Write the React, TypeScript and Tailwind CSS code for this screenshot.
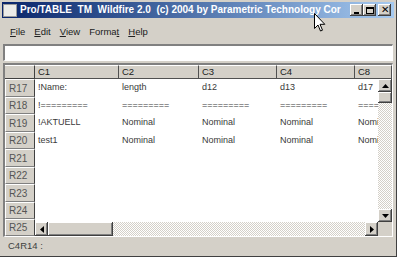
import { ReactNode } from 'react';

const RAISED =
  'bg-[#d4d0c8] shadow-[inset_-1px_-1px_0_#404040,inset_1px_1px_0_#ffffff,inset_-2px_-2px_0_#808080]';
const TRACK = 'bg-[repeating-conic-gradient(#d4d0c8_0_25%,#ffffff_0_50%)] bg-[length:2px_2px]';

const COLS = [
  { id: 'C1', w: 'w-[84px] shrink-0' },
  { id: 'C2', w: 'w-[80px] shrink-0' },
  { id: 'C3', w: 'w-[78px] shrink-0' },
  { id: 'C4', w: 'w-[78px] shrink-0' },
  { id: 'C8', w: 'flex-1 min-w-0' },
];

// last column is hidden behind the scrollbar, only its visible part is kept
const ROWS = [
  ['!Name:', 'length', 'd12', 'd13', 'd17'],
  ['!=========', '=========', '=========', '=========', '===='],
  ['!AKTUELL', 'Nominal', 'Nominal', 'Nominal', 'Nomi'],
  ['test1', 'Nominal', 'Nominal', 'Nominal', 'Nomi'],
];

const ROW_IDS = ['R17', 'R18', 'R19', 'R20', 'R21', 'R22', 'R23', 'R24', 'R25'];
const ROW_H = [
  'h-[18px]',
  'h-[17px]',
  'h-[18px]',
  'h-[17px]',
  'h-[18px]',
  'h-[17px]',
  'h-[18px]',
  'h-[17px]',
  'h-[17px]',
];

function Arrow({ dir }: { dir: 'up' | 'down' | 'left' | 'right' }) {
  const pts = {
    up: '0,4 7,4 3.5,0',
    down: '0,0 7,0 3.5,4',
    left: '4,0 4,7 0,3.5',
    right: '0,0 0,7 4,3.5',
  }[dir];
  const vertical = dir === 'up' || dir === 'down';
  return (
    <svg width={vertical ? 7 : 4} height={vertical ? 4 : 7} viewBox={vertical ? '0 0 7 4' : '0 0 4 7'}>
      <polygon points={pts} fill="#000" />
    </svg>
  );
}

function TitleButton({ children }: { children: ReactNode }) {
  return (
    <div className={`${RAISED} w-[13px] h-[12px] flex items-center justify-center`}>{children}</div>
  );
}

function MenuItem({ pre, u, post }: { pre?: string; u: string; post?: string }) {
  return (
    <span className="text-[#202020]">
      {pre}
      <span className="underline underline-offset-[1px]">{u}</span>
      {post}
    </span>
  );
}

export default function App() {
  return (
    <div className="relative w-[400px] h-[259px] bg-white overflow-hidden font-['Liberation_Sans',Arial,sans-serif]">
      <div className="w-[397px] h-[257px] bg-[#d4d0c8] border-r border-b border-[#404040] flex flex-col">
        {/* title bar */}
        <div className="mx-[2px] mt-[2px] h-[16px] flex items-center bg-gradient-to-r from-[#0a246a] to-[#a6caf0]">
          <div className="ml-[1px] w-[14px] h-[13px] bg-[#ecebe8] border border-[#9a9a9a]" />
          <div className="ml-[3px] whitespace-pre text-white font-bold text-[10px] leading-none">
            Pro/TABLE  TM  Wildfire 2.0  (c) 2004 by Parametric Technology Cor
          </div>
          <div className="ml-auto mr-[3px] flex items-center">
            <TitleButton>
              <div className="w-[5px] h-[2px] bg-black mt-[5px] -ml-[1px]" />
            </TitleButton>
            <TitleButton>
              <div className="w-[8px] h-[7px] border border-black border-t-2" />
            </TitleButton>
            <div className="w-[2px]" />
            <TitleButton>
              <span className="text-[10px] leading-none text-black">✕</span>
            </TitleButton>
          </div>
        </div>

        {/* menu */}
        <div className="h-[25px] pt-[3px] pl-[10px] flex items-center gap-[9px] text-[9.5px]">
          <MenuItem u="F" post="ile" />
          <MenuItem u="E" post="dit" />
          <MenuItem u="V" post="iew" />
          <MenuItem pre="Forma" u="t" />
          <MenuItem u="H" post="elp" />
        </div>

        {/* input */}
        <div className="mx-[3px] mt-[1px] h-[17px] bg-white border-t-2 border-l-2 border-t-[#808080] border-l-[#808080] border-b border-r border-b-white border-r-white" />

        {/* grid */}
        <div className="mx-[3px] mt-[2px] h-[174px] flex flex-col border-t-2 border-l-2 border-t-[#808080] border-l-[#808080] border-b border-r border-b-white border-r-[#ffffff]">
          <div className="h-[14px] shrink-0 flex text-[9.5px] text-[#202020] bg-[#d4d0c8]">
            <div className="w-[30px] shrink-0 border-r border-b border-[#404040] border-t border-t-white" />
            {COLS.map((c) => (
              <div
                key={c.id}
                className={`${c.w} pl-[3px] flex items-center border-r border-b border-[#505050] border-t border-t-white`}
              >
                {c.id}
              </div>
            ))}
          </div>
          <div className="flex-1 min-h-0 flex">
            <div className="w-[30px] shrink-0 flex flex-col">
              {ROW_IDS.map((r, i) => (
                <div
                  key={r}
                  className={`${ROW_H[i]} shrink-0 pl-[3px] flex items-center text-[10px] text-[#555] bg-[#d4d0c8] border-t border-l border-white border-b border-b-[#808080] border-r border-r-[#404040]`}
                >
                  {r}
                </div>
              ))}
            </div>
            <div className="flex-1 min-w-0 flex flex-col">
              <div className="flex-1 min-h-0 flex">
                <div className="flex-1 min-w-0 bg-white overflow-hidden flex flex-col text-[9px] text-[#3a3a3a]">
                  {ROWS.map((row, i) => (
                    <div key={i} className={`${ROW_H[i]} shrink-0 flex items-center`}>
                      {row.map((cell, j) => (
                        <div key={j} className={`${COLS[j].w} pl-[3px] whitespace-nowrap overflow-hidden`}>
                          {cell}
                        </div>
                      ))}
                    </div>
                  ))}
                </div>
                <div className={`w-[14px] shrink-0 flex flex-col ${TRACK}`}>
                  <div className={`${RAISED} h-[13px] shrink-0 flex items-center justify-center`}>
                    <Arrow dir="up" />
                  </div>
                  <div className={`${RAISED} h-[11px] shrink-0`} />
                  <div className="flex-1" />
                  <div className={`${RAISED} h-[13px] shrink-0 flex items-center justify-center`}>
                    <Arrow dir="down" />
                  </div>
                </div>
              </div>
              <div className="h-[14px] shrink-0 flex">
                <div className={`flex-1 min-w-0 flex ${TRACK}`}>
                  <div className={`${RAISED} w-[13px] shrink-0 flex items-center justify-center`}>
                    <Arrow dir="left" />
                  </div>
                  <div className={`${RAISED} w-[65px] shrink-0`} />
                  <div className="flex-1" />
                  <div className={`${RAISED} w-[13px] shrink-0 flex items-center justify-center`}>
                    <Arrow dir="right" />
                  </div>
                </div>
                <div className="w-[14px] shrink-0 bg-[#d4d0c8]" />
              </div>
            </div>
          </div>
        </div>

        {/* status bar */}
        <div className="h-[19px] shrink-0 pl-[8px] flex items-center text-[9.5px] text-[#404040]">C4R14 :</div>
      </div>

      {/* mouse cursor */}
      <svg className="absolute left-[314px] top-[13px]" width="12" height="19" viewBox="0 0 12 19">
        <path
          d="M0.5 0.5 L0.5 15.5 L4 12 L6.5 18 L8.5 17.2 L6 11.3 L10.8 11.3 Z"
          fill="#fff"
          stroke="#000"
          strokeWidth="1"
          strokeLinejoin="miter"
        />
      </svg>
    </div>
  );
}
